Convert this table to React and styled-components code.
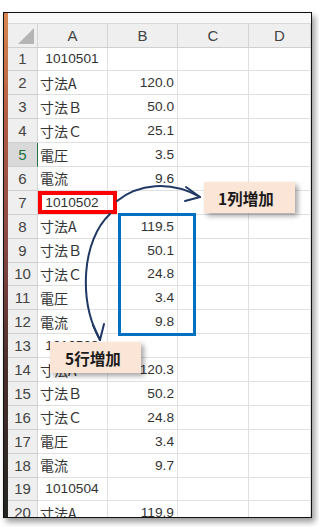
import React from 'react';
import styled, { createGlobalStyle } from 'styled-components';

const GlobalStyle = createGlobalStyle`
  html, body {
    margin: 0;
    padding: 0;
    background: #ffffff;
  }
  body {
    font-family: "Liberation Sans", "Noto Sans CJK JP", sans-serif;
  }
`;

const Page = styled.div`
  width: 319px;
  height: 527px;
  padding: 12px 0 0 3px;
  box-sizing: border-box;
`;

const Frame = styled.div`
  position: relative;
  width: 309px;
  height: 506px;
  box-sizing: border-box;
  border: 1px solid #111;
  box-shadow: 3px 4px 6px rgba(0, 0, 0, 0.4);
  overflow: hidden;
  display: flex;
  background: #fff;
`;

const Strip = styled.div`
  width: 4px;
  flex: none;
  background: linear-gradient(180deg, #d8884f 0%, #b35d45 20%, #8a4846 45%, #4a2f2c 70%, #232520 100%);
`;

const Sheet = styled.div`
  flex: 1;
  display: flex;
  flex-direction: column;
  min-width: 0;
`;

const TopBar = styled.div`
  height: 11px;
  flex: none;
  background: #f7f7f7;
  border-bottom: 1px solid #dadada;
  box-sizing: border-box;
`;

const Grid = styled.div`
  display: grid;
  grid-template-columns: 30px 70px 70px 71px 1fr;
  grid-template-rows: 23.5px;
  grid-auto-rows: 23.9px;
`;

const HeadCell = styled.div`
  box-sizing: border-box;
  background: ${(p) => (p.$active ? '#d9d9d9' : '#efefef')};
  color: ${(p) => (p.$active ? '#217346' : '#444')};
  border-right: 1px solid ${(p) => (p.$active ? '#217346' : '#d4d4d4')};
  border-bottom: 1px solid #cfcfcf;
  display: flex;
  align-items: center;
  justify-content: center;
  font-size: 15px;
  position: relative;
`;

const Corner = styled(HeadCell)`
  &::after {
    content: '';
    position: absolute;
    right: 3px;
    bottom: 3px;
    width: 0;
    height: 0;
    border-style: solid;
    border-width: 0 0 16px 16px;
    border-color: transparent transparent #b5b5b5 transparent;
  }
`;

const Cell = styled.div`
  box-sizing: border-box;
  border-right: 1px solid #e0e0e0;
  border-bottom: 1px solid #e0e0e0;
  display: flex;
  align-items: center;
  justify-content: ${(p) => (p.$align === 'right' ? 'flex-end' : p.$align === 'center' ? 'center' : 'flex-start')};
  padding: 0 3px 0 2px;
  font-size: 14px;
  color: #333;
  white-space: nowrap;
  overflow: hidden;
  font-family: "Noto Sans CJK JP", sans-serif;
`;

const Num = styled.span`
  font-family: "Liberation Sans", sans-serif;
  font-size: 13.7px;
  color: #333;
`;

const Overlay = styled.div`
  position: absolute;
  left: -4px;
  top: -13px;
  width: 319px;
  height: 527px;
  pointer-events: none;
`;

const MarkBox = styled.div`
  position: absolute;
  box-sizing: border-box;
  left: ${(p) => p.$x}px;
  top: ${(p) => p.$y}px;
  width: ${(p) => p.$w}px;
  height: ${(p) => p.$h}px;
  border: ${(p) => p.$bw}px solid ${(p) => p.$color};
`;

const Callout = styled.div`
  position: absolute;
  box-sizing: border-box;
  left: ${(p) => p.$x}px;
  top: ${(p) => p.$y}px;
  width: 91px;
  height: 31px;
  padding-left: ${(p) => p.$pad}px;
  background: #fbe5d6;
  box-shadow: 3px 3px 5px rgba(0, 0, 0, 0.35);
  display: flex;
  align-items: center;
  font-family: "Noto Sans CJK JP", sans-serif;
  font-weight: bold;
  font-size: 15.5px;
  color: #1a1a1a;
`;

const Arrows = styled.svg`
  position: absolute;
  left: 0;
  top: 0;
`;

const rows = [
  ['1010501', ''],
  ['寸法A', '120.0'],
  ['寸法Ｂ', '50.0'],
  ['寸法Ｃ', '25.1'],
  ['電圧', '3.5'],
  ['電流', '9.6'],
  ['1010502', ''],
  ['寸法A', '119.5'],
  ['寸法Ｂ', '50.1'],
  ['寸法Ｃ', '24.8'],
  ['電圧', '3.4'],
  ['電流', '9.8'],
  ['1010503', ''],
  ['寸法A', '120.3'],
  ['寸法Ｂ', '50.2'],
  ['寸法Ｃ', '24.8'],
  ['電圧', '3.4'],
  ['電流', '9.7'],
  ['1010504', ''],
  ['寸法A', '119.9'],
];

const isId = (s) => /^\d+$/.test(s);

export default function App() {
  return (
    <Page>
      <GlobalStyle />
      <Frame>
        <Strip />
        <Sheet>
          <TopBar />
          <Grid>
            <Corner />
            {['A', 'B', 'C', 'D'].map((c) => (
              <HeadCell key={c}>{c}</HeadCell>
            ))}
            {rows.map(([a, b], i) => (
              <React.Fragment key={i}>
                <HeadCell $active={i === 4}>{i + 1}</HeadCell>
                <Cell $align={isId(a) ? 'center' : 'left'}>
                  {isId(a) ? <Num>{a}</Num> : a}
                </Cell>
                <Cell $align="right">{b && <Num>{b}</Num>}</Cell>
                <Cell />
                <Cell />
              </React.Fragment>
            ))}
          </Grid>
        </Sheet>
        <Overlay>
          <MarkBox $x={38} $y={191} $w={79} $h={23} $bw={4} $color="#ff0000" />
          <MarkBox $x={118} $y={213} $w={78} $h={123} $bw={3.5} $color="#0070c0" />
          <Arrows width="319" height="527" viewBox="0 0 319 527">
            <g fill="none" stroke="#1f3864" strokeWidth="2" strokeLinecap="round" strokeLinejoin="round">
              <path d="M117 201 C138 184 170 180 200 197" />
              <path d="M186 187 L200 197 L185 201" />
              <path d="M110 214 C82 240 78 300 100 340" />
              <path d="M93 325 L100 340 L104 324" />
            </g>
          </Arrows>
          <Callout $x={204} $y={182} $pad={14}>1列増加</Callout>
          <Callout $x={50} $y={342} $pad={15}>5行増加</Callout>
        </Overlay>
      </Frame>
    </Page>
  );
}
